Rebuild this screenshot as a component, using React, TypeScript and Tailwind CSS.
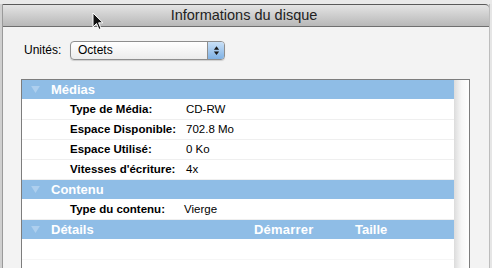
import React from "react";

// Fenêtre "Informations du disque" (style Mac OS X)

const font = { fontFamily: '"Liberation Sans", Arial, sans-serif' };

function Triangle() {
  return (
    <svg viewBox="0 0 10 8" className="w-[9px] h-[7px]">
      <path d="M0 0 L10 0 L5 8 Z" fill="#aecfee" />
    </svg>
  );
}

function SectionHeader({ title, cols }: { title: string; cols?: boolean }) {
  return (
    <div className="h-[20px] flex flex-col">
      <div className="h-[19px] bg-[#8fbde6] flex items-center">
        <div className="w-[29px] flex justify-end pr-[11px]">
          <Triangle />
        </div>
        <span className="text-[13px] font-bold text-white w-[203px]">{title}</span>
        {cols && (
          <>
            <span className="text-[13px] font-bold text-white w-[101px] tracking-[0.2px]">Démarrer</span>
            <span className="text-[13px] font-bold text-white">Taille</span>
          </>
        )}
      </div>
      <div className="h-px bg-white" />
    </div>
  );
}

function Row({ label, value, w = 116 }: { label: string; value?: string; w?: number }) {
  return (
    <div className="h-[20px] flex items-center border-b border-[#efefef] bg-white text-[11.5px] text-black">
      <span className="ml-[48px] font-bold" style={{ width: w }}>
        {label}
      </span>
      <span>{value}</span>
    </div>
  );
}

export default function App() {
  return (
    <div className="w-[492px] h-[268px] overflow-hidden bg-[#e6e6e6] relative" style={font}>
      <div className="h-[4px] bg-[#e9e9e9]" />
      <div className="flex h-[264px]">
        <div className="w-[3px] bg-[#cfcfcf] border-r border-[#9a9a9a]" />
        <div className="flex-1 flex flex-col border-r border-[#bdbdbd] mr-[2px]">
          {/* barre de titre */}
          <div className="h-[23px] border-t border-[#5a5a5a] border-b border-b-[#6f6f6f] bg-gradient-to-b from-[#e4e4e4] to-[#b8b8b8] flex items-center justify-center rounded-tr-[4px]">
            <span className="text-[14.5px] text-[#222] -ml-[4px]">Informations du disque</span>
          </div>

          <div className="flex-1 bg-[#f3f3f3] flex flex-col">
            {/* unités */}
            <div className="h-[52px] flex items-center pl-[19px] pb-[6px]">
              <span className="text-[12px] text-black w-[48px] pl-[2px]">Unités:</span>
              <div className="w-[155px] h-[19px] rounded-[4px] border border-[#8e8e8e] bg-gradient-to-b from-white to-[#ececec] flex items-center shadow-[0_1px_1px_rgba(0,0,0,0.15)]">
                <span className="flex-1 text-[12px] text-black pl-[7px]">Octets</span>
                <div className="w-[17px] h-full rounded-r-[3px] bg-gradient-to-b from-[#c9e0f6] to-[#7fb1e4] border-l border-[#8e8e8e] flex items-center justify-center">
                  <svg viewBox="0 0 8 12" className="w-[7px] h-[11px]">
                    <path d="M4 1 L7 5 L1 5 Z M4 11 L7 7 L1 7 Z" fill="#1a1a1a" />
                  </svg>
                </div>
              </div>
            </div>

            {/* tableau */}
            <div className="ml-[18px] w-[449px] flex-1 border-t border-l border-r border-[#7d7d7d] bg-white flex">
              <div className="flex-1 flex flex-col">
                <SectionHeader title="Médias" />
                <Row label="Type de Média:" value="CD-RW" />
                <Row label="Espace Disponible:" value="702.8 Mo" />
                <Row label="Espace Utilisé:" value="0 Ko" />
                <Row label="Vitesses d'écriture:" value="4x" />
                <SectionHeader title="Contenu" />
                <Row label="Type du contenu:" value="Vierge" w={114} />
                <SectionHeader title="Détails" cols />
                <div className="h-[20px] border-b border-[#f6f6f6]" />
              </div>
              <div className="w-[15px] bg-gradient-to-r from-[#dcdcdc] via-[#f7f7f7] to-white" />
            </div>
          </div>
        </div>
      </div>

      {/* curseur */}
      <svg viewBox="0 0 12 19" className="absolute left-[92px] top-[12px] w-[12px] h-[19px]">
        <path
          d="M1 1 L1 15 L4.5 11.5 L7 17.5 L9 16.5 L6.6 10.8 L11 10.8 Z"
          fill="#111"
          stroke="#fff"
          strokeWidth="1"
          strokeLinejoin="round"
        />
      </svg>
    </div>
  );
}
